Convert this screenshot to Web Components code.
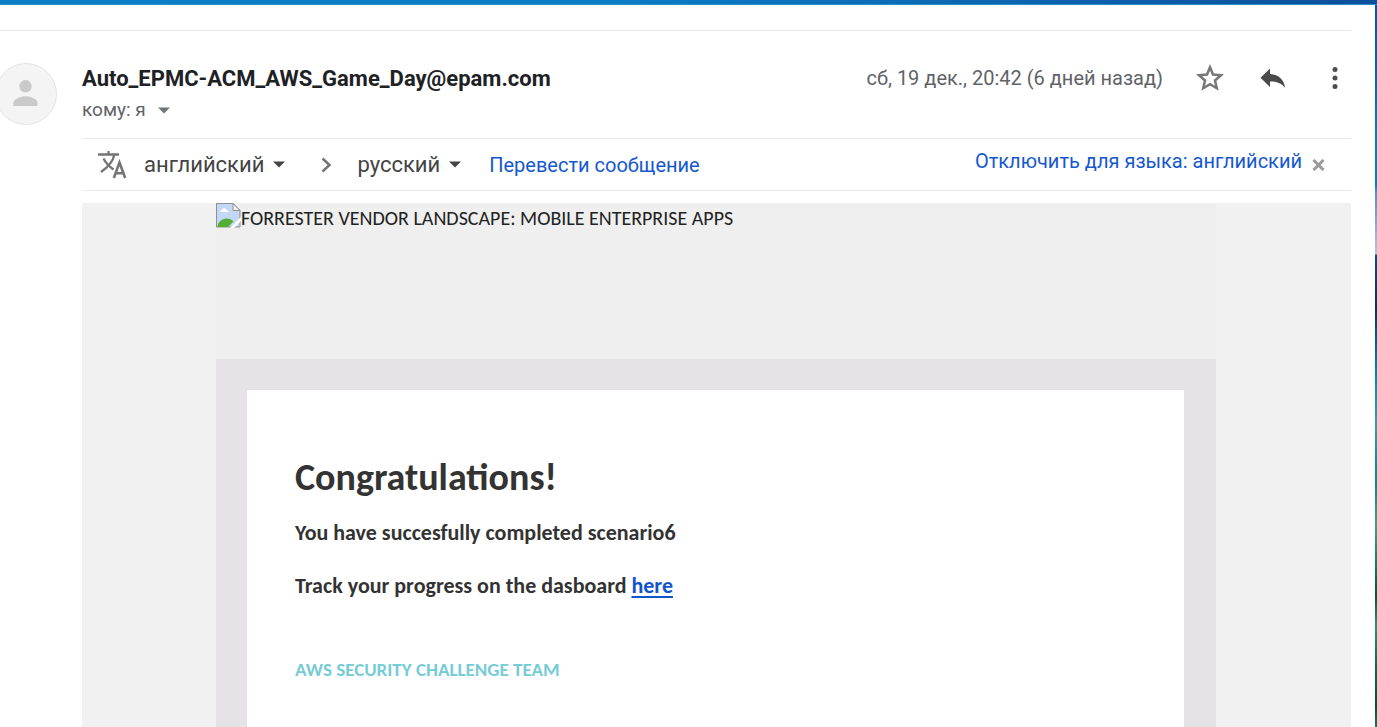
<!DOCTYPE html>
<html lang="ru">
<head>
<meta charset="utf-8">
<meta name="viewport" content="width=device-width, initial-scale=1">
<title>Auto_EPMC-ACM_AWS_Game_Day@epam.com</title>
<style>
body { margin: 0; font-family: Roboto, "Liberation Sans", sans-serif; color: #5f6368; }
mail-letter a { color: #1155cc; text-decoration-thickness: 2px; text-underline-offset: 3px; }
</style>
</head>
<body>
<window-frame>
  <mail-message>
    <message-header slot="header" sender="Auto_EPMC-ACM_AWS_Game_Day@epam.com" recipient="кому: я" date="сб, 19 дек., 20:42 (6 дней назад)"></message-header>
    <translate-bar slot="translate"></translate-bar>
    <mail-letter heading="Congratulations!" banner="FORRESTER VENDOR LANDSCAPE: MOBILE ENTERPRISE APPS" signature="AWS SECURITY CHALLENGE TEAM">
      <p>You have succesfully completed scenario6</p>
      <p>Track your progress on the dasboard <a href="#dashboard">here</a></p>
    </mail-letter>
  </mail-message>
</window-frame>

<template id="window-frame">
  <style>
    :host { display: grid; grid-template: 5px 1fr / 1fr 2px; min-height: 100vh; background: #fff; }
    .top { grid-column: 1 / 3; background: linear-gradient(90deg, #0a7fc8, #0b7cc6 45%, #0d4f9b); border-bottom: 1px solid #2f8ccc; box-sizing: border-box; }
    .edge { background: linear-gradient(#0f529f, #0a5fae 60px, #087cba 130px, #087cba 180px, #5c8ac8 188px, #bcbfe2 249px, #0c4a8c 250px, #082f5c 305px, #0a5585 330px, #078bae 375px, #3f9aa8 420px, #0c8a94 460px, #128873 480px, #4a9e86 520px, #0f7d5c 560px, #0a4f3a 590px, #35906c 620px, #0b6b4c 660px, #084a3a 700px, #1f7d62 727px); }
    main { min-width: 0; display: flex; flex-direction: column; }
  </style>
  <div class="top"></div>
  <main><slot></slot></main>
  <div class="edge"></div>
</template>

<template id="mail-message">
  <style>
    :host { flex: 1; display: flex; flex-direction: column; padding: 25px 24px 0 0; }
    .rule { border-top: 1px solid #e6eaee; }
    .message { flex: 1; display: grid; grid-template-columns: 82px 1fr; }
    .avatar { margin: 32px 0 0 -5px; width: 62px; height: 62px; }
    .avatar svg { display: block; }
    .column { min-width: 0; display: flex; flex-direction: column; }
    ::slotted(*) { flex: none; }
    .letter { flex: 1; display: flex; margin-top: 12px; }
    .letter ::slotted(*) { flex: 1; }
  </style>
  <div class="rule"></div>
  <div class="message">
    <div class="avatar">
      <svg width="62" height="62" viewBox="0 0 62 62" aria-hidden="true">
        <circle cx="31" cy="31" r="30.500" fill="#f4f4f4" stroke="#e4e4e4"/>
        <circle cx="30.500" cy="23.300" r="6.200" fill="#cacaca"/>
        <path d="M18.500 43v-3.200c0-4.200 8-6.600 12-6.600s12 2.400 12 6.600V43z" fill="#cacaca"/>
      </svg>
    </div>
    <div class="column">
      <slot name="header"></slot>
      <slot name="translate"></slot>
      <div class="letter"><slot></slot></div>
    </div>
  </div>
</template>

<template id="message-header">
  <style>
    :host { display: flex; justify-content: space-between; height: 107px; box-sizing: border-box; padding-top: 32px; }
    h3 { margin: 0; font-size: 22px; line-height: 32px; font-weight: 700; color: #202124; }
    button { border: 0; padding: 0; margin: 0; background: none; font: inherit; color: inherit; cursor: pointer; }
    svg { display: block; }
    .to { display: flex; align-items: center; gap: 12px; font-size: 19px; line-height: 30px; }
    .actions { display: flex; align-items: center; height: 30px; }
    time { font-size: 20px; white-space: nowrap; }
    .star { margin-left: 33px; }
    .reply { margin-left: 36px; }
    .more { margin-left: 46px; padding: 0 13px 0 0; }
  </style>
  <div>
    <h3></h3>
    <button class="to" type="button"><span></span><svg width="12" height="7" viewBox="0 0 12 7" aria-hidden="true"><path d="M0 0.500h12L6 6.500z" fill="#70757a"/></svg></button>
  </div>
  <div class="actions">
    <time></time>
    <button class="star" type="button" aria-label="Пометить"><svg width="28" height="28" viewBox="0 0 28 28"><path d="M14 3.300l3 7.300 8 .7-6 5.200 1.800 7.700-6.800-4.100-6.800 4.100L9 16.500l-6-5.200 8-.7z" fill="none" stroke="#777" stroke-width="2.500"/></svg></button>
    <button class="reply" type="button" aria-label="Ответить"><svg width="26" height="22" viewBox="0 0 26 22"><path d="M10 7V1.500L.5 10.800l9.500 9.200v-5.600c6.700 0 11.500 1.600 15 6.300C24.300 13 19 7.600 10 7z" fill="#4a4a4a"/></svg></button>
    <button class="more" type="button" aria-label="Ещё"><svg width="6" height="24" viewBox="0 0 6 24"><g fill="#4d4d4d"><circle cx="3" cy="3.500" r="2.500"/><circle cx="3" cy="12" r="2.500"/><circle cx="3" cy="20.500" r="2.500"/></g></svg></button>
  </div>
</template>

<template id="translate-bar">
  <style>
    :host { display: flex; align-items: center; height: 53px; box-sizing: border-box; border: solid #e6eaee; border-width: 1px 0; padding: 0 26px 0 16px; color: #444; font-size: 22px; }
    svg { display: block; flex: none; }
    label { display: flex; align-items: center; gap: 9px; }
    select { appearance: none; field-sizing: content; border: 0; padding: 0; margin: 0; background: none; font: inherit; color: inherit; }
    .from { margin-left: 17px; }
    .next { margin: 0 25px 0 36px; }
    a { color: #1558d0; text-decoration: none; font-size: 20px; white-space: nowrap; }
    .run { margin-left: 28px; }
    .off { margin-left: auto; padding-bottom: 8px; }
    button { border: 0; padding: 0; margin: 0 0 0 10px; background: none; cursor: pointer; }
  </style>
  <svg width="29" height="29" viewBox="0 0 29 29" aria-hidden="true"><g fill="none" stroke="#757575" stroke-width="2.300"><path d="M0 4.500h21M10.500 1v3.500M16.500 4.500C15 11 9.500 17.500 3 22M5.500 8.500c2 4 5 7.500 10 11"/><path d="M15.800 28l5.700-15.500L27.200 28M17.600 23.200h7.800" stroke-width="2.600"/></g></svg>
  <label class="from"><select aria-label="Исходный язык"><option>английский</option><option>русский</option></select><svg width="12" height="7" viewBox="0 0 12 7"><path d="M0 0.500h12L6 6.500z" fill="#444"/></svg></label>
  <svg class="next" width="11" height="16" viewBox="0 0 11 16" aria-hidden="true"><path d="M1.500 1.500L8.500 8l-7 6.500" fill="none" stroke="#757575" stroke-width="2.500"/></svg>
  <label><select aria-label="Язык перевода"><option>русский</option><option>английский</option></select><svg width="12" height="7" viewBox="0 0 12 7"><path d="M0 0.500h12L6 6.500z" fill="#444"/></svg></label>
  <a class="run" href="#translate">Перевести сообщение</a>
  <a class="off" href="#never">Отключить для языка: английский</a>
  <button type="button" aria-label="Закрыть"><svg width="13" height="12" viewBox="0 0 13 12"><path d="M1.500 1l10 10M11.500 1l-10 10" stroke="#9a9a9a" stroke-width="3"/></svg></button>
</template>

<template id="mail-letter">
  <style>
    :host { display: flex; justify-content: center; padding-right: 1px; background: #f1f1f1; font-family: Calibri, Carlito, Lato, sans-serif; color: #333; }
    article { width: 100%; max-width: 1000px; display: flex; flex-direction: column; }
    .banner { display: flex; align-items: flex-start; height: 156px; background: #efefef; font-size: 20px; line-height: 30px; color: #222; }
    .banner svg { display: block; flex: none; }
    .frame { flex: 1; display: flex; background: #e5e3e6; padding: 31px 32px 0 31px; }
    .card { flex: 1; background: #fff; padding: 63px 48px 24px; }
    h1 { margin: 0 0 16px; font-size: 38px; line-height: 48px; }
    ::slotted(p) { margin: 0 0 21px; font-size: 22px; line-height: 32px; font-weight: 700; }
    .signature { margin: 52px 0 0; font-size: 19px; line-height: 32px; font-weight: 700; color: #76ccd6; }
  </style>
  <article>
    <div class="banner">
      <svg width="25" height="25" viewBox="0 0 25 25" aria-hidden="true">
        <path d="M.5.500h16.500l7 7v16.500H.500z" fill="#c3d8f6" stroke="#8f8f8f"/>
        <path d="M4 9c0-2 2-2 2-2 .500-2.500 4-2.500 4.500 0 2 0 2 2 2 2z" fill="#fff"/>
        <path d="M1.500 24c0-5 5-8.500 9-8.500 3 0 5.500 1 7 3L12 24z" fill="#55ad36"/>
        <path d="M14 25L25 14v4l-7 7z" fill="#fff"/>
        <path d="M17 .500v7h7z" fill="#f4f4f4" stroke="#8f8f8f"/>
      </svg>
      <span class="alt"></span>
    </div>
    <div class="frame">
      <section class="card">
        <h1></h1>
        <slot></slot>
        <p class="signature"></p>
      </section>
    </div>
  </article>
</template>

<script>
class TemplateElement extends HTMLElement {
  constructor() {
    super();
    this.attachShadow({ mode: "open" }).append(
      document.getElementById(this.localName).content.cloneNode(true));
  }
  fill(selector, attribute) {
    this.shadowRoot.querySelector(selector).textContent = this.getAttribute(attribute);
  }
}
customElements.define("window-frame", class extends TemplateElement {});
customElements.define("mail-message", class extends TemplateElement {});
customElements.define("message-header", class extends TemplateElement {
  connectedCallback() {
    this.fill("h3", "sender");
    this.fill(".to span", "recipient");
    this.fill("time", "date");
  }
});
customElements.define("translate-bar", class extends TemplateElement {});
customElements.define("mail-letter", class extends TemplateElement {
  connectedCallback() {
    this.fill("h1", "heading");
    this.fill(".alt", "banner");
    this.fill(".signature", "signature");
  }
});
</script>
</body>
</html>
